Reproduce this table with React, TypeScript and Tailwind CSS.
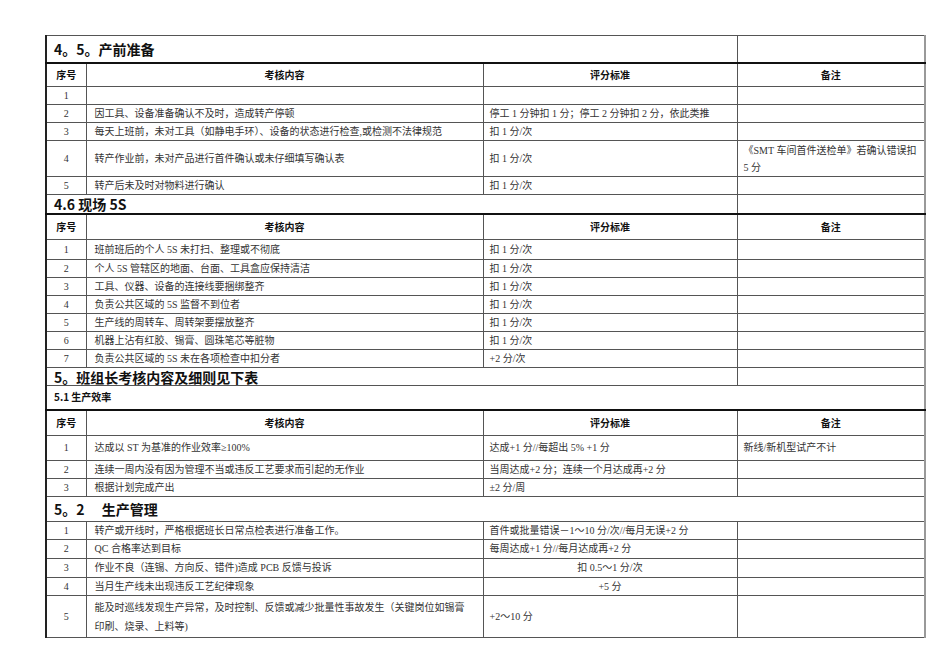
const body = "font-['Liberation_Serif','Noto_Sans_CJK_SC',serif]";
const cell = "border border-[#555] px-[6px] py-0 align-middle leading-[14px]";

type Row = { no: string; content: React.ReactNode; score: React.ReactNode; note?: React.ReactNode; h: string; center?: boolean };

const Title = ({ text, h, size, split = true }: { text: string; h: string; size: string; split?: boolean }) => (
  <tr className={h}>
    <td
      colSpan={split ? 3 : 4}
      className={`${cell} pl-[7px] ${size} font-bold text-[#111] font-['Noto_Sans_CJK_SC',sans-serif] whitespace-pre`}
    >
      {text}
    </td>
    {split && <td className={cell}></td>}
  </tr>
);

const Head = ({ h }: { h: string }) => (
  <tr className={`${h} font-['Noto_Sans_CJK_SC',sans-serif] text-[10px] font-bold text-[#111]`}>
    <td className={`${cell} border-t-2 border-t-[#111] text-center`}>序号</td>
    <td className={`${cell} border-t-2 border-t-[#111] text-center`}>考核内容</td>
    <td className={`${cell} border-t-2 border-t-[#111] text-center`}>评分标准</td>
    <td className={`${cell} border-t-2 border-t-[#111] text-center`}>备注</td>
  </tr>
);

const Rows = ({ rows }: { rows: Row[] }) => (
  <>
    {rows.map((r, i) => (
      <tr key={i} className={r.h}>
        <td className={`${cell} text-center`}>{r.no}</td>
        <td className={`${cell} pl-[8px] whitespace-nowrap`}>{r.content}</td>
        <td className={`${cell} whitespace-nowrap ${r.center ? "text-center" : ""}`}>{r.score}</td>
        <td className={`${cell}`}>{r.note}</td>
      </tr>
    ))}
  </>
);

const prep: Row[] = [
  { no: "1", content: "", score: "", h: "h-[18px]" },
  { no: "2", content: "因工具、设备准备确认不及时，造成转产停顿", score: "停工 1 分钟扣 1 分；停工 2 分钟扣 2 分，依此类推", h: "h-[18px]" },
  { no: "3", content: "每天上班前，未对工具（如静电手环）、设备的状态进行检查,或检测不法律规范", score: "扣 1 分/次", h: "h-[18px]" },
  {
    no: "4",
    content: "转产作业前，未对产品进行首件确认或未仔细填写确认表",
    score: "扣 1 分/次",
    note: (
      <span className="block leading-[17px]">
        《SMT 车间首件送检单》若确认错误扣
        <br />5 分
      </span>
    ),
    h: "h-[36px]",
  },
  { no: "5", content: "转产后未及时对物料进行确认", score: "扣 1 分/次", h: "h-[18px]" },
];

const site: Row[] = [
  { no: "1", content: "班前班后的个人 5S 未打扫、整理或不彻底", score: "扣 1 分/次", h: "h-[20px]" },
  { no: "2", content: "个人 5S 管辖区的地面、台面、工具盒应保持清洁", score: "扣 1 分/次", h: "h-[18px]" },
  { no: "3", content: "工具、仪器、设备的连接线要捆绑整齐", score: "扣 1 分/次", h: "h-[18px]" },
  { no: "4", content: "负责公共区域的 5S 监督不到位者", score: "扣 1 分/次", h: "h-[18px]" },
  { no: "5", content: "生产线的周转车、周转架要摆放整齐", score: "扣 1 分/次", h: "h-[18px]" },
  { no: "6", content: "机器上沾有红胶、锡膏、圆珠笔芯等脏物", score: "扣 1 分/次", h: "h-[18px]" },
  { no: "7", content: "负责公共区域的 5S 未在各项检查中扣分者", score: "+2 分/次", h: "h-[18px]" },
];

const eff: Row[] = [
  { no: "1", content: "达成以 ST 为基准的作业效率≥100%", score: "达成+1 分//每超出 5%  +1 分", note: "新线/新机型试产不计", h: "h-[25px]" },
  { no: "2", content: "连续一周内没有因为管理不当或违反工艺要求而引起的无作业", score: "当周达成+2 分；连续一个月达成再+2 分", h: "h-[18px]" },
  { no: "3", content: "根据计划完成产出", score: "±2 分/周", h: "h-[18px]" },
];

const mgmt: Row[] = [
  { no: "1", content: "转产或开线时，严格根据班长日常点检表进行准备工作。", score: "首件或批量错误－1～10 分/次//每月无误+2 分", h: "h-[18px]" },
  { no: "2", content: "QC 合格率达到目标", score: "每周达成+1 分//每月达成再+2 分", h: "h-[19px]" },
  { no: "3", content: "作业不良（连锡、方向反、错件)造成 PCB 反馈与投诉", score: "扣 0.5～1 分/次", h: "h-[19px]", center: true },
  { no: "4", content: "当月生产线未出现违反工艺纪律现象", score: "+5 分", h: "h-[18px]", center: true },
  {
    no: "5",
    content: (
      <span className="block leading-[19px]">
        能及时巡线发现生产异常，及时控制、反馈或减少批量性事故发生（关键岗位如锡膏
        <br />
        印刷、烧录、上料等)
      </span>
    ),
    score: "+2～10 分",
    h: "h-[42px]",
  },
];

export default function App() {
  return (
    <div className="w-[950px] h-[672px] bg-white pt-[35px] pl-[45px]">
      <table className={`table-fixed border-collapse w-[879px] border-l-2 border-l-[#222] border-r-2 border-r-[#999] text-[10px] text-[#333] ${body}`}>
        <colgroup>
          <col className="w-[40px]" />
          <col className="w-[397px]" />
          <col className="w-[254px]" />
          <col className="w-[188px]" />
        </colgroup>
        <tbody>
          <Title text="4。5。产前准备" h="h-[27px]" size="text-[14px]" />
          <Head h="h-[24px]" />
          <Rows rows={prep} />
          <Title text="4.6 现场 5S" h="h-[19px]" size="text-[14px]" />
          <Head h="h-[26px]" />
          <Rows rows={site} />
          <Title text="5。班组长考核内容及细则见下表" h="h-[18px]" size="text-[14px]" />
          <Title text="5.1 生产效率" h="h-[24px]" size="text-[10px]" split={false} />
          <Head h="h-[26px]" />
          <Rows rows={eff} />
          <Title text={"5。2\u3000 生产管理"} h="h-[25px]" size="text-[14px]" split={false} />
          <Rows rows={mgmt} />
        </tbody>
      </table>
    </div>
  );
}
